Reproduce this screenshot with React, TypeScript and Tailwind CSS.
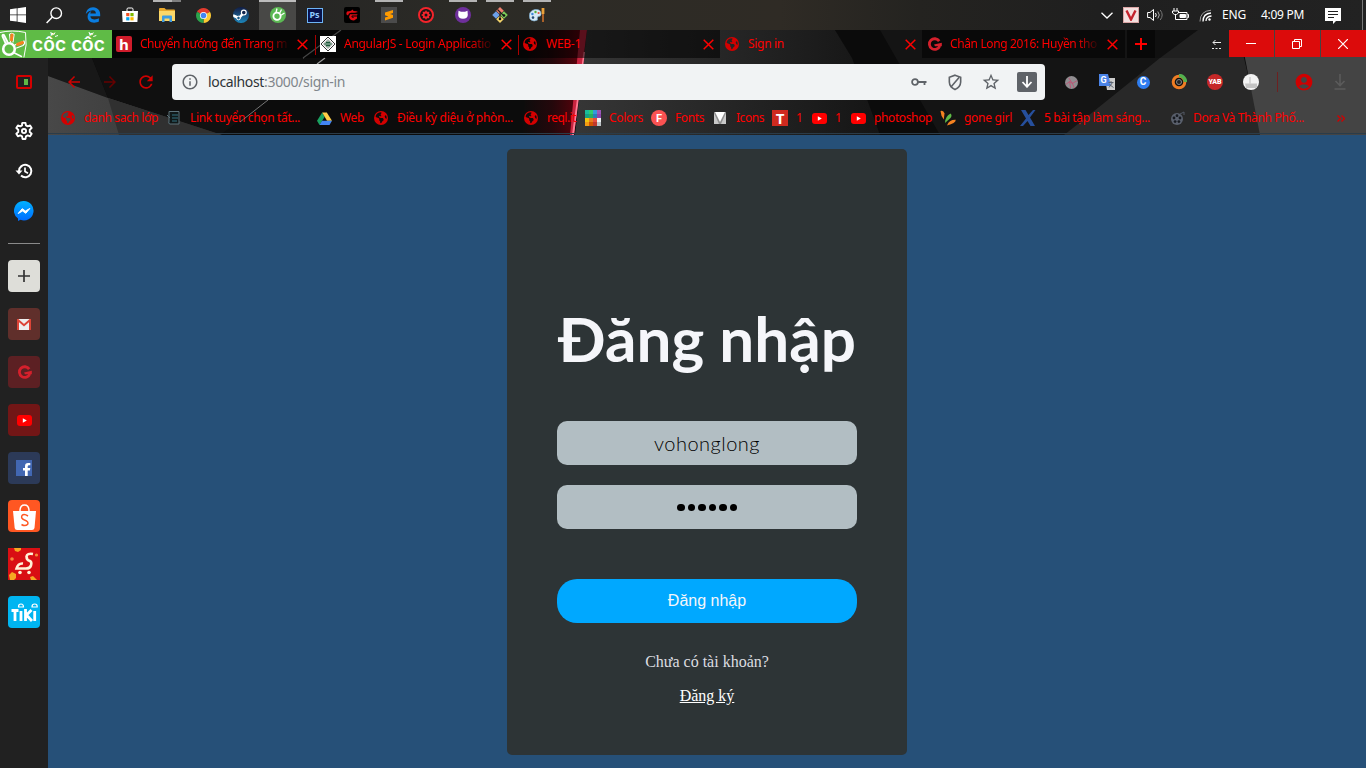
import React, { useLayoutEffect, useRef, useState } from 'react';
import { FaEarthAmericas } from 'react-icons/fa6';
import { MdInfoOutline, MdStarBorder, MdRefresh, MdHistory, MdAccountCircle, MdArrowBack, MdArrowForward } from 'react-icons/md';
import { FaEdgeLegacy } from 'react-icons/fa';

/* Single-line label whose tracking is adjusted so that it fills `w` pixels. */
function Label({ text, w, className = '' }: { text: React.ReactNode; w: number; className?: string }) {
  const ref = useRef<HTMLSpanElement>(null);
  const [spacing, setSpacing] = useState(0);
  useLayoutEffect(() => {
    const el = ref.current;
    if (!el) return;
    const n = (el.textContent || '').length;
    const natural = el.getBoundingClientRect().width - n * spacing;
    if (n > 1) setSpacing((w - natural) / n);
  }, []);
  return (
    <span ref={ref} className={`inline-block shrink-0 whitespace-pre ${className}`} style={{ letterSpacing: spacing }}>
      {text}
    </span>
  );
}

const Globe = () => <FaEarthAmericas className="size-[14px] text-[#d40000]" />;

function YouTube({ className = 'w-[15px] h-[11px]' }: { className?: string }) {
  return (
    <svg viewBox="0 0 15 11" className={className}>
      <rect width="15" height="11" rx="3" fill="#f00" />
      <path d="M5.8 3.2v4.6L9.8 5.5z" fill="#fff" />
    </svg>
  );
}

function Garena({ className = 'size-[15px]', color = '#d5202c' }: { className?: string; color?: string }) {
  return (
    <svg viewBox="0 0 16 16" className={className}>
      <path d="M13 4.400A5.700 5.700 0 1 0 13.600 9.500" fill="none" stroke={color} strokeWidth="3" />
      <path d="M7.500 8 15.800 6.200V9.800H8.500z" fill={color} />
    </svg>
  );
}

function CocCocHand({ className = '' }: { className?: string }) {
  return (
    <svg viewBox="0 0 28 28" className={className} fill="none" strokeLinecap="round">
      <path d="M0 2.500Q12-.5 25.500 2.500 27.500 15 24 27" stroke="#fff" strokeWidth="1" />
      <circle cx="9" cy="19" r="5.800" stroke="#fff" strokeWidth="2.600" />
      <path d="M5.500 13 2.500 6.500Q2 4 4 5l3.500 7" stroke="#fff" strokeWidth="1.800" />
      <path d="M10.500 12 9.500 4.500Q11 2 14 4.500L13 12" stroke="#fff" strokeWidth="1.200" />
      <path d="M11.500 10 12 5" stroke="#f58220" strokeWidth="3" />
      <path d="m15 15 9-4q1.500 2.500-1 4.500L16.500 18" stroke="#fff" strokeWidth="1.200" />
      <path d="m17.500 14.500 5-2" stroke="#f58220" strokeWidth="3" />
      <path d="m14.500 23 7 3.500" stroke="#fff" strokeWidth="1.400" />
    </svg>
  );
}

/* ---------- Windows taskbar ---------- */

const taskIcons: { mark?: string; active?: boolean; icon: React.ReactNode }[] = [
  { icon: <svg viewBox="0 0 16 16" className="mr-px size-4"><path d="M0 2.3 6.7 1.3V7.5H0zM7.5 1.2 16 0V7.5H7.5zM0 8.3H6.7V14.6L0 13.7zM7.5 8.3H16V16L7.5 14.8z" fill="#fff" /></svg> },
  { icon: <svg viewBox="0 0 17 17" className="mr-[2px] size-[17px]"><circle cx="10.2" cy="6.2" r="5.3" fill="none" stroke="#fff" strokeWidth="1.4" /><path d="M6.4 10 .6 16" stroke="#fff" strokeWidth="1.5" /></svg> },
  { icon: <FaEdgeLegacy className="size-4 text-[#0a7de0]" /> },
  { icon: <svg viewBox="0 0 16 16" className="size-4"><path d="M5 4V2.2Q5 1 6.2 1H9.8Q11 1 11 2.2V4" fill="none" stroke="#fff" strokeWidth="1" /><path d="M0 4H16L15.4 15H.6z" fill="#fff" /><path d="M4.2 6h3.2v3.2H4.2z" fill="#f25022" /><path d="M8.4 6h3.2v3.2H8.4z" fill="#7fba00" /><path d="M4.2 10.2h3.2v3.2H4.2z" fill="#00a4ef" /><path d="M8.4 10.2h3.2v3.2H8.4z" fill="#ffb900" /></svg> },
  { mark: 'bg-[linear-gradient(90deg,#b4b4b4_0_19px,#7e7e7e_19px)]', icon: <svg viewBox="0 0 16 14" className="w-4 h-[14px]"><path d="M0 1Q0 0 1 0H5.5L7 1.5H15Q16 1.5 16 2.5V13H0z" fill="#e9a92c" /><path d="M0 3H16V13H0z" fill="#fbd768" /><path d="M3 14V8.5Q3 7.5 4 7.5H12Q13 7.5 13 8.5V14H10.5V10.5H5.5V14z" fill="#3d9be0" /></svg> },
  { icon: <Chrome /> },
  { icon: <span className="flex size-4 items-center justify-center overflow-hidden rounded-full bg-gradient-to-b from-[#101d45] to-[#1b88bd]"><svg viewBox="0 0 16 16" className="size-4"><path d="M0 8.5 6 11 10.5 6" fill="none" stroke="#fff" strokeWidth="2.6" /><circle cx="10.8" cy="5.6" r="2.4" fill="#12254e" stroke="#fff" strokeWidth="1.2" /><circle cx="5.5" cy="11" r="1.8" fill="#155684" stroke="#fff" /></svg></span> },
  { active: true, mark: 'bg-[#bdbdbd]', icon: <svg viewBox="0 0 16 16" className="size-4"><circle cx="8" cy="8" r="8" fill="#5cb954" /><circle cx="7" cy="9.200" r="3.600" fill="none" stroke="#fff" strokeWidth="1.800" /><path d="M6 5.500 7 1.500M9.500 6.500 11.500 2.500M10.500 8.500l4-2.500" stroke="#fff" strokeWidth="1.300" /></svg> },
  { icon: <span className="flex h-[15px] w-4 items-center justify-center border border-[#6db4f5] bg-[#08124a] pb-px font-['Noto_Sans'] text-[9px] leading-none font-bold text-[#90caff]">Ps</span> },
  { icon: <span className="flex size-4 items-center justify-center rounded-[2px] bg-black"><svg viewBox="0 0 14 14" className="size-[14px]"><path d="M2 3.500Q6 3.500 8 1.500L8.300 3Q12 3 13 4L10 4.800H6Q3.500 5 3 7.500L1.500 6.500Q1 5 2 3.500M5 6.200H12.500L12 7.600H7Q5.500 9 7.500 10H9V9.500H7.500V8.400H12V10.500L9 12.500Q5 12.500 4 9z" fill="#e00b12" /></svg></span> },
  { mark: 'bg-[#b4b4b4]', icon: <span className="flex size-4 items-center justify-center bg-[#4b4b4b]"><svg viewBox="0 0 12 12" className="size-3"><path d="M2 3.4 10 1V4L7 5l3 1v2.8L2 11.4V8.5L5.4 7.4 2 6.3z" fill="#ff9b00" /></svg></span> },
  { icon: <svg viewBox="0 0 16 16" className="size-4"><circle cx="8" cy="8" r="7" fill="#151515" stroke="#f3242b" strokeWidth="2" /><path d="m8 3 1 1.7h2.4l-.4 2L13 8l-2 1.3.4 2H9L8 13l-1-1.7H4.6l.4-2L3 8l2-1.3-.4-2H7z" fill="#f3242b" /><circle cx="8" cy="8" r="1.5" fill="#151515" /></svg> },
  { mark: 'bg-[#b4b4b4]', icon: <svg viewBox="0 0 16 16" className="size-4"><circle cx="8" cy="8" r="8" fill="#6e2f9b" /><path d="M3.500 3.700 6 4.800h4l2.500-1.100.3 4.300Q12.700 11.500 8 11.800 3.300 11.500 3.200 8z" fill="#fff" /></svg> },
  { mark: 'bg-[#b4b4b4]', icon: <svg viewBox="0 0 16 16" className="size-4"><path d="m8 0 3.8 3.8L8 7.6 4.2 3.8z" fill="#f08070" /><path d="m4 4.2 3.8 3.8L4 11.8.2 8z" fill="#6d9fe8" /><path d="m12 4.2 3.8 3.8-3.8 3.8L8.2 8z" fill="#7ccc5a" /><path d="m8 8.4 3.8 3.8L8 16l-3.8-3.8z" fill="#f5d56c" /><path d="M5.5 2.5 8 5v8M8 5l4 4" stroke="#1d1d1d" strokeWidth="1.1" fill="none" /><circle cx="8" cy="12" r="1.3" fill="#111" /><circle cx="12" cy="8.500" r="1.3" fill="#111" /></svg> },
  { mark: 'bg-[#b4b4b4]', icon: <svg viewBox="0 0 16 16" className="size-4"><path d="M.5 10Q-.5 4 6 2.500 12.500 2 12 7.500 12 9.500 9 9.500 8 11 8.500 13 5 15 2 13 .5 12 .5 10" fill="#d8e9f5" stroke="#79a9cb" strokeWidth=".7" /><circle cx="3.400" cy="7" r="1.200" fill="#3a86d9" /><circle cx="6.500" cy="5" r="1.200" fill="#56ad3f" /><circle cx="9.600" cy="6" r="1.100" fill="#e5533b" /><circle cx="4" cy="10.600" r="1.300" fill="#264c74" /><path d="M14 1v6" stroke="#e9a13a" strokeWidth="2.800" /><path d="M14 7v8" stroke="#b9672a" strokeWidth="1.800" /></svg> },
];

function Chrome() {
  return (
    <svg viewBox="0 0 16 16" className="size-[15px]">
      <path d="M8 8 1.1 4A8 8 0 0 1 14.9 4z" fill="#e33b2e" />
      <path d="M8 8 14.9 4A8 8 0 0 1 8 16z" fill="#fcc934" />
      <path d="M8 8 8 16A8 8 0 0 1 1.1 4z" fill="#2ba24c" />
      <circle cx="8" cy="8" r="3.8" fill="#fff" />
      <circle cx="8" cy="8" r="3" fill="#4285f4" />
    </svg>
  );
}

function Taskbar() {
  return (
    <div className="flex h-[30px] shrink-0 bg-[linear-gradient(90deg,#242424_0,#242424_240px,#2c2b26_480px,#2f2b25_780px,#242320_920px,#1f1f1f_1100px,#222_1366px)]">
      {taskIcons.map((t, i) => (
        <div key={i} className={`relative flex w-[37px] shrink-0 items-center justify-center ${t.active ? 'bg-[#484846]' : ''}`}>
          {t.icon}
          {t.mark && <span className={`absolute top-0 h-[2px] ${t.active ? 'inset-x-0' : 'right-[4px] left-[5px]'} ${t.mark}`} />}
        </div>
      ))}
      <div className="ml-auto flex items-center font-['Noto_Sans'] text-[12px] text-white">
        <svg viewBox="0 0 12 7" className="mr-[10px] h-[7px] w-3"><path d="m.5.7 5.500 5.300L11.500.7" fill="none" stroke="#fff" strokeWidth="1.300" /></svg>
        <span className="mr-2 flex size-4 items-center justify-center border border-[#dba5a5] bg-[#f4e0df]"><svg viewBox="0 0 12 12" className="size-3"><path d="m1.500 1.500 4.500 9 4.500-9" fill="none" stroke="#c3212b" strokeWidth="2.400" /></svg></span>
        <svg viewBox="0 0 17 14" className="mr-2 h-[14px] w-[17px]" fill="none" stroke="#fff"><path d="M.6 4.500H3L6.500 1.500v11L3 9.500H.6z" /><path d="M8.500 5q1.500 2 0 4" /><path d="M10.800 3.500q3 3.500 0 7" stroke="#aaa" /><path d="M13.200 2q4 5 0 10" stroke="#777" /></svg>
        <svg viewBox="0 0 17 14" className="mr-[10px] h-[14px] w-[17px]" fill="none" stroke="#fff"><path d="M7 4.500h8v7H6" /><path d="M15.500 6.500h1v3h-1" /><path d="M8 6.500h5.500v3H8z" fill="#fff" /><path d="M2 0v3M5 0v3M.5 3h6v2L4.500 6.500h-2L.5 5zM3.500 6.500v5H7" /></svg>
        <svg viewBox="0 0 14 14" className="mr-[9px] size-[14px]" fill="none" stroke="#fff"><circle cx="10.500" cy="11.500" r="1.200" fill="#fff" stroke="none" /><path d="M7 13q0-4.500 5.500-5M4 13.500q0-8 8-8.500" strokeWidth="1.300" /><path d="M1 13.500Q1 3 12 2.200" stroke="#999" /></svg>
        <Label text="ENG" w={24} className="mr-[15px]" />
        <Label text="4:09 PM" w={43} className="mr-[21px]" />
        <svg viewBox="0 0 16 16" className="mr-[21px] size-4 translate-y-px"><path d="M0 0H16V13H11L8 16V13H0z" fill="#fff" /><path d="M3 3.500h10M3 6.500h10M3 9.500h6" stroke="#202020" /></svg>
        <span className="mr-[3px] h-[30px] w-px bg-[#777]" />
      </div>
    </div>
  );
}

/* ---------- Browser chrome ---------- */

function ThemeArt() {
  return (
    <svg viewBox="0 0 1366 105" className="absolute inset-x-0 top-0 h-[105px] w-[1366px]" preserveAspectRatio="none">
      <defs>
        <linearGradient id="glow" x1="0" x2="1"><stop offset="0" stopColor="#50000a" stopOpacity="0" /><stop offset=".5" stopColor="#50000a" stopOpacity=".35" /><stop offset="1" stopColor="#70000c" stopOpacity=".9" /></linearGradient>
        <linearGradient id="mid" x1="0" x2="1"><stop offset="0" stopColor="#363636" /><stop offset=".35" stopColor="#292929" /><stop offset="1" stopColor="#101010" /></linearGradient>
        <linearGradient id="shard" x1="0" x2="1"><stop offset="0" stopColor="#484848" /><stop offset=".4" stopColor="#404040" /><stop offset="1" stopColor="#2c2c2c" /></linearGradient>
      </defs>
      <rect width="1366" height="105" fill="#0c0c0c" />
      <path d="M48 28H92L108 68 48 46z" fill="#181818" />
      <path d="M92 28H200L268 70 220 105 108 68z" fill="#101010" />
      <path d="M48 46 108 68 222 105H48z" fill="url(#shard)" />
      <path d="M108 68 222 105H119z" fill="#303030" />
      <path d="M341 0 303 28M325 28 317 34" stroke="#999" strokeWidth="1.200" />
      <path d="M268 70 240 92" stroke="#777" strokeWidth="1" />
      <path d="M530 0H582L571 105H522z" fill="url(#glow)" />
      <path d="M587 0H840L925 105H575z" fill="url(#mid)" />
      <path d="M580 0h7L574 105h-4z" fill="#c8243f" />
      <path d="M583.500 22h1.500L574 105h-2z" fill="#ff7b92" />
      <path d="M835 0 925 105H1090L1200 0z" fill="#141414" />
      <path d="M835 0H880L940 105H880L852 28z" fill="#0b0b0b" />
      <path d="M1198 0 1160 28 1078 94 1064 105H1262L1244 28 1240 0z" fill="#282828" />
      <path d="M1240 0H1366V105H1260L1245 28z" fill="#444" />
    </svg>
  );
}

const Cross = () => (
  <svg viewBox="0 0 11 11" className="size-[11px] shrink-0"><path d="M.7.7l9.600 9.600M10.300.7.7 10.300" stroke="#f00" strokeWidth="1.500" /></svg>
);

function Tab({ icon, text, w, active, fade, width }: { icon: React.ReactNode; text: string; w: number; active?: boolean; fade?: boolean; width: string }) {
  return (
    <div className={`flex h-7 shrink-0 items-center pl-1 ${width} ${active ? '' : 'bg-black/55'}`}>
      <span className="mr-2 flex size-4 shrink-0 items-center justify-center">{icon}</span>
      <div className={`flex w-[148px] shrink-0 ${fade ? '[mask-image:linear-gradient(90deg,#000_126px,rgba(0,0,0,.1)_148px)]' : ''}`}>
        <Label text={text} w={w} />
      </div>
      <span className="ml-[9px]"><Cross /></span>
    </div>
  );
}

function TabStrip() {
  return (
    <div className="relative flex h-7 shrink-0">
      <div className="flex w-28 shrink-0 items-center bg-[#5fbb46]">
        <CocCocHand className="size-7" />
        <svg viewBox="0 0 76 28" className="ml-[4px] h-7 w-[76px]">
          <text x="0" y="20.500" fill="#fff" fontFamily="Inter" fontWeight="600" fontSize="18.500" textLength="73" lengthAdjust="spacingAndGlyphs">cốc cốc</text>
          <path d="M19.500 4.500 18.800 2M21.500 5 23 2.500M23 6.500l3-1M57.800 4.500 57 2M59.800 5l1.500-2.500M61.300 6.500l3-1" stroke="#fff" strokeWidth="1" />
        </svg>
      </div>
      <Tab width="w-[204px]" fade w={147} text="Chuyển hướng đến Trang m" icon={<span className="flex size-4 items-center justify-center rounded-[2px] bg-[#cf1c2b] font-['Open_Sans'] text-[15px] leading-none font-bold text-white">h</span>} />
      <Tab width="w-[202px]" fade w={147} text="AngularJS - Login Applicatio" icon={<span className="flex size-4 items-center justify-center bg-white"><svg viewBox="0 0 16 16" className="size-4"><path d="m8 1 7 7-7 7-7-7z" fill="none" stroke="#333" /><path d="m8 3.500 4.500 4.500L8 12.500 3.500 8z" fill="#b8cabe" stroke="#777" strokeWidth=".6" /><path d="M4.500 8h7M6 6.300h4M6 9.700h4" stroke="#1d5a3c" strokeWidth="1.200" /></svg></span>} />
      <Tab width="w-[202px]" w={35} text="WEB-1" icon={<Globe />} />
      <Tab width="w-[202px]" active w={36} text="Sign in" icon={<Globe />} />
      <Tab width="w-[203px]" fade w={147} text="Chân Long 2016: Huyền tho" icon={<Garena />} />
      <div className="ml-[2px] flex w-7 items-center justify-center bg-black/60">
        <svg viewBox="0 0 12 12" className="size-3"><path d="M6 0v12M0 6h12" stroke="#f00" strokeWidth="2" /></svg>
      </div>
      <div className="flex flex-1 items-center justify-end bg-black/20">
        <svg viewBox="0 0 11 9" className="mr-[7px] h-[9px] w-[11px]" fill="none" stroke="#eee"><path d="M10 2.500H2M4.500 0 2 2.500 4.500 5" /><path d="M1 8.500h10" strokeDasharray="2 1.500" /></svg>
      </div>
      <div className="flex h-[27px] shrink-0 gap-px">
        <div className="flex w-[45px] items-center justify-center bg-[#dc0b0b]"><span className="mr-px h-px w-[10px] bg-white" /></div>
        <div className="flex w-[45px] items-center justify-center bg-[#dc0b0b]"><svg viewBox="0 0 10 10" className="mr-px size-[10px]" fill="none" stroke="#fff"><path d="M.5 2.500h7v7h-7zM2.500 2.500v-2h7v7h-2" /></svg></div>
        <div className="flex w-[45px] items-center justify-center bg-[#dc0b0b]"><svg viewBox="0 0 10 10" className="mr-px size-[10px]"><path d="m0 0 10 10M10 0 0 10" stroke="#fff" strokeWidth="1.200" /></svg></div>
      </div>
      <span className="absolute top-[5px] left-[315px] h-5 w-px bg-[#a00]" />
      <span className="absolute top-[5px] left-[518px] h-5 w-px bg-[#a00]" />
    </div>
  );
}

const extensions: React.ReactNode[] = [
  <svg viewBox="0 0 14 14" className="size-[13px]"><circle cx="7" cy="7" r="7" fill="#918e91" /><path d="M1 9 5 6l3 2 5-3M5 6l1 7M8 8l2 5M4 2l4 6" stroke="#c9456d" strokeWidth=".8" fill="none" /></svg>,
  <svg viewBox="0 0 16 16" className="size-4"><path d="M6 4h10v12H8z" fill="#ccc" /><path d="M0 0h9l3 12H0z" fill="#4b84e8" /><text x="1.500" y="9" fill="#fff" fontSize="9" fontWeight="700" fontFamily="Roboto">G</text><path d="M9.500 8.500h5M12 7v1.500m-2 5 3.500-5m-3 2 4 3" stroke="#5c6470" fill="none" /></svg>,
  <span className="flex size-[13px] items-center justify-center rounded-full bg-[#2f7df0] font-['Roboto'] text-[10px] leading-none font-bold text-white">C</span>,
  <svg viewBox="0 0 16 16" className="size-4"><circle cx="8" cy="8" r="5.800" fill="#111" stroke="#ef7d24" strokeWidth="3" /><path d="M8 1.500A6.500 6.500 0 0 1 14.500 8" fill="none" stroke="#53b04e" strokeWidth="3.500" /><circle cx="8" cy="8" r="2.500" fill="#222" stroke="#888" /></svg>,
  <span className="flex size-4 items-center justify-center rounded-full bg-[#c62828] font-['Roboto'] text-[7px] leading-none font-black text-white">YAB</span>,
  <svg viewBox="0 0 16 16" className="size-4"><circle cx="8" cy="8" r="8" fill="#f4f4f4" /><path d="M2 9.500H14V14H3z" fill="#c4c4c4" /><path d="M7 3v6.500" stroke="#bbb" /></svg>,
];

function Toolbar() {
  return (
    <div className="relative flex h-12 items-center">
      <div className="flex w-[124px] shrink-0 items-center pl-2 text-[#d00000]">
        <span className="flex w-9 justify-center"><MdArrowBack className="size-[18px]" /></span>
        <span className="flex w-9 justify-center text-[#650000]"><MdArrowForward className="size-[18px]" /></span>
        <span className="flex w-9 justify-center"><MdRefresh className="size-5" /></span>
      </div>
      <div className="flex h-9 w-[873px] shrink-0 items-center rounded-[4px] bg-[#f1f3f4] text-[#5f6368]">
        <MdInfoOutline className="mx-[9px] size-[18px]" />
        <Label w={137} className="pb-px text-[14px]" text={<><span className="text-[#2f3337]">localhost</span><span className="text-[#80868b]">:3000/sign-in</span></>} />
        <div className="ml-auto flex pr-0">
          <span className="flex w-9 items-center justify-center"><svg viewBox="0 0 16 8" className="h-2 w-4" fill="none" stroke="#5f6368"><circle cx="4" cy="4" r="2.900" strokeWidth="1.800" /><path d="M7 4h8.500M13.500 4v3" strokeWidth="1.800" /></svg></span>
          <span className="flex w-9 items-center justify-center"><svg viewBox="0 0 16 18" className="h-[17px] w-4" fill="none" stroke="#5f6368" strokeWidth="1.700"><path d="M8 1.200 14 3.500V8.500Q13.800 14 8 16.500 2.200 14 2 8.500V3.500z" /><path d="m3.500 14 9-10.500" /></svg></span>
          <span className="flex w-9 items-center justify-center"><MdStarBorder className="size-5" /></span>
          <span className="flex w-9 items-center justify-center"><span className="flex size-5 items-center justify-center rounded-[2px] bg-[#5f6368]"><svg viewBox="0 0 12 12" className="size-3"><path d="M6 0v10.500M1.500 6 6 10.800 10.500 6" fill="none" stroke="#fff" strokeWidth="1.800" /></svg></span></span>
        </div>
      </div>
      <div className="ml-2 flex">
        {extensions.map((e, i) => <span key={i} className="flex w-9 items-center justify-center">{e}</span>)}
      </div>
      <span className="ml-2 h-5 w-px bg-[#6d2020]" />
      <span className="ml-2 flex w-9 justify-center"><MdAccountCircle className="size-5 text-[#d00000]" /></span>
      <span className="flex w-9 justify-center"><svg viewBox="0 0 12 16" className="h-4 w-3" fill="none" stroke="#5b5b5b" strokeWidth="1.600"><path d="M6 0v11M1.500 7 6 11.500 10.500 7M.5 15h11" /></svg></span>
    </div>
  );
}

const bookmarks: { text: string; w: number; slot: string; icon: React.ReactNode }[] = [
  { text: 'danh sach lớp', w: 74, slot: 'w-[106px]', icon: <Globe /> },
  { text: 'Link tuyển chọn tất...', w: 110, slot: 'w-[150px]', icon: <svg viewBox="0 0 16 16" className="size-4"><path d="M3 1.500h10V14H4Q2 14 3 11z" fill="#101818" stroke="#5c727b" /><path d="M6 5h6M6 8h6M6 11h5" stroke="#327080" /><path d="m1 5 3 3" stroke="#5c727b" /></svg> },
  { text: 'Web', w: 24, slot: 'w-[57px]', icon: <svg viewBox="0 0 16 16" className="size-[15px]"><path d="M5.500 1.500 0 10.500 2.700 15 8.200 6z" fill="#1aa260" /><path d="M5.500 1.500h5L16 10.500h-5.300z" fill="#ffcf48" /><path d="M5.400 10.500H16L13.300 15H2.700z" fill="#4285f4" /></svg> },
  { text: 'Điều kỳ diệu ở phòn...', w: 116, slot: 'w-[150px]', icon: <Globe /> },
  { text: 'reql.it', w: 29, slot: 'w-[62px]', icon: <Globe /> },
  { text: 'Colors', w: 34, slot: 'w-[66px]', icon: <span className="grid size-4 grid-cols-4 grid-rows-4"><i className="bg-[#1abc9c]" /><i className="bg-[#2ecc71]" /><i className="bg-[#3498db]" /><i className="bg-[#9b59b6]" /><i className="bg-[#16a085]" /><i className="bg-[#27ae60]" /><i className="bg-[#2980b9]" /><i className="bg-[#8e44ad]" /><i className="bg-[#f1c40f]" /><i className="bg-[#e67e22]" /><i className="bg-[#e74c3c]" /><i className="bg-[#ecf0f1]" /><i className="bg-[#f39c12]" /><i className="bg-[#d35400]" /><i className="bg-[#c0392b]" /><i className="bg-[#bdc3c7]" /></span> },
  { text: 'Fonts', w: 29, slot: 'w-[61px]', icon: <span className="flex size-4 items-center justify-center rounded-full bg-[#fa5252] font-['Roboto'] text-[11px] leading-none font-bold text-white">F</span> },
  { text: 'Icons', w: 28, slot: 'w-[60px]', icon: <svg viewBox="0 0 12 12" className="mr-px size-3"><path d="M0 0h12v12H0z" fill="#8f8f8f" /><path d="M1 0h10L6 10z" fill="#fff" /><path d="M0 1v11h5zM12 1v11H7z" fill="#c8c8c8" /></svg> },
  { text: '1', w: 6, slot: 'w-[39px]', icon: <span className="flex size-4 items-center justify-center bg-[#cf2a1f] font-['Open_Sans'] text-[15px] leading-none font-bold text-white">T</span> },
  { text: '1', w: 6, slot: 'w-[39px]', icon: <YouTube /> },
  { text: 'photoshop', w: 58, slot: 'w-[90px]', icon: <YouTube /> },
  { text: 'gone girl', w: 48, slot: 'w-[80px]', icon: <svg viewBox="0 0 16 16" className="size-4"><path d="M.5 1Q3.500 0 4.500 3.500L3.800 9.500Q1 6.500 .5 1" fill="#f58220" /><path d="M10.500 3.500q2 2 0 4.500l-5.500 5Q5 6.500 10.500 3.500" fill="#5fbb46" /><path d="M15.800 9.800q0 3.500-8.800 5.700 2-6 8.800-5.700" fill="#f58220" /></svg> },
  { text: '5 bài tập làm sáng...', w: 106, slot: 'w-[149px]', icon: <svg viewBox="0 0 16 16" className="size-4"><path d="M1 0h4.500l3 5L13 0h2.500L10 7.500 15 16h-4.500L7.500 11 3 16H0L6 8.500z" fill="#264f9c" /></svg> },
  { text: 'Dora Và Thành Phố...', w: 111, slot: 'w-[140px]', icon: <svg viewBox="0 0 16 16" className="size-4"><circle cx="8" cy="9" r="6" fill="#5a606d" /><g fill="#171a20"><circle cx="8" cy="5.700" r="1.400" /><circle cx="11" cy="8" r="1.400" /><circle cx="9.900" cy="11.600" r="1.400" /><circle cx="6.100" cy="11.600" r="1.400" /><circle cx="5" cy="8" r="1.400" /></g><path d="m11 4 4-2v3" stroke="#525865" fill="none" /></svg> },
];

function Bookmarks() {
  return (
    <div className="relative flex h-7 items-center border-b border-[#2b3c49] pb-[3px] pl-3 text-[#f00]">
      {bookmarks.map((b, i) => (
        <div key={i} className={`flex shrink-0 items-center gap-2 ${b.slot}`}>
          <span className="flex size-4 shrink-0 items-center justify-center">{b.icon}</span>
          <Label text={b.text} w={b.w} />
        </div>
      ))}
      <svg viewBox="0 0 8 7" className="mt-px ml-7 h-[7px] w-2" fill="none" stroke="#d00000" strokeWidth="1.400"><path d="m.5.5 3 3-3 3M4.500.5l3 3-3 3" /></svg>
    </div>
  );
}

/* ---------- Left sidebar ---------- */

const tile = 'mb-4 flex size-8 shrink-0 items-center justify-center overflow-hidden rounded-[4px]';

function Sidebar() {
  return (
    <aside className="relative flex w-12 shrink-0 flex-col items-center bg-[#212121]">
      <span className="mt-[17px] flex h-[14px] w-4 items-center justify-end rounded-[2px] border-2 border-[#d50000] pr-[2px]"><span className="h-[6px] w-1 bg-[#5fb946]" /></span>
      <svg viewBox="0 0 24 24" className="mt-[32px] size-5" fill="none" stroke="#fff" strokeWidth="2.300" strokeLinejoin="round"><path d="m9.700 3 .5-.8h3.600l.5 3 2.200 1.200 2.800-1.100 1.900 3.200-2.300 1.900v2.900l2.300 1.900-1.900 3.200-2.800-1.100-2.200 1.200-.5 3h-3.600l-.5-3-2.200-1.200-2.800 1.100-1.900-3.200 2.300-1.900v-2.900L2.800 8.500l1.900-3.200 2.800 1.100 2.200-1.200z" /><circle cx="12" cy="12" r="2.500" /></svg>
      <svg viewBox="0 0 20 20" className="mt-5 size-5" fill="none" stroke="#fff" strokeWidth="2"><path d="M5 10a6.200 6.200 0 1 1 2 4.600" /><path d="M1.500 9.500h7L5 13.500z" fill="#fff" stroke="none" /><path d="M11 6.500v4l3 1.800" strokeWidth="1.700" /></svg>
      <svg viewBox="0 0 20 20" className="mt-5 size-5"><defs><linearGradient id="msg" x2="0" y2="1"><stop stopColor="#00b2ff" /><stop offset="1" stopColor="#006aff" /></linearGradient></defs><path d="M10 0a9.700 9.700 0 1 1-3.500 18.800L4 20V17.500A9.700 9.700 0 0 1 10 0" fill="url(#msg)" /><path d="m4.200 12.500 4-4.800 3.200 2.300 4.400-2.500-4 4.800-3.200-2.300z" fill="#fff" stroke="#fff" /></svg>
      <span className="mt-[22px] mb-4 h-px w-8 shrink-0 bg-[#8a8a8a]" />
      <span className={`${tile} bg-[#deded9]`}><svg viewBox="0 0 12 12" className="size-3"><path d="M6 0v12M0 6h12" stroke="#333" strokeWidth="1.700" /></svg></span>
      <span className={`${tile} bg-[#602f2b]`}><svg viewBox="0 0 14 11" className="h-[11px] w-[14px]"><path d="M0 0h14v11H0z" fill="#eee" /><path d="M1 11V1l6 5.200L13 1v10" fill="none" stroke="#dc4437" strokeWidth="2" /></svg></span>
      <span className={`${tile} bg-[#5c2023]`}><Garena /></span>
      <span className={`${tile} bg-[#721616]`}><YouTube /></span>
      <span className={`${tile} bg-[#2c3a58]`}><span className="flex size-4 items-end justify-end bg-[#4267b2] pr-px"><svg viewBox="0 0 9 14" className="h-[14px] w-[9px]"><path d="M3 14V8.500H1V6H3V4.200Q3 1 6 1H8.300V3.300H7Q5.700 3.300 5.700 4.500V6H8.300L7.900 8.500H5.700V14z" fill="#fff" /></svg></span></span>
      <span className={`${tile} bg-[#ff5722]`}><svg viewBox="0 0 32 32" className="size-8"><path d="M5 11H28L26.500 28Q26 30 24 30H9Q7 30 6.700 28z" fill="#fff" /><path d="M12 11Q12 5 16.500 5T21 11" fill="none" stroke="#fff" strokeWidth="1.500" /><path d="M20 16q-4-2.500-6-.5-1.500 3 2.500 4.500 4.500 1.500 3.200 4.300-2.500 2.500-6.200.2" fill="none" stroke="#ff5722" strokeWidth="1.500" /></svg></span>
      <span className="mb-4 size-8 shrink-0"><svg viewBox="0 0 32 32" className="size-8"><path d="M0 0h32v32H0z" fill="#d90f13" /><path d="m6 0 1 3 3 1 3-2V0zM1 27l3-3 4 2v4l-2 2H2zM23 32l-1-3 3-1 4 4" fill="#f6a723" /><circle cx="4" cy="11" r="1.800" fill="#f58a3c" /><circle cx="28.500" cy="7" r="1.600" fill="#f58a3c" /><path d="M25 6q-6-1-6.500 2.500Q18.500 12 22 13q2 1 1 4.500-1 3-5 3H8.500Q10 15 15 15.500" fill="none" stroke="#fff1d7" strokeWidth="2.600" /><circle cx="12" cy="24.500" r="1.800" fill="#fff1d7" /><circle cx="21" cy="24.500" r="1.800" fill="#fff1d7" /></svg></span>
      <span className={`${tile} bg-[#00b5f1]`}><svg viewBox="0 0 32 32" className="size-8" fill="none" stroke="#fff" strokeWidth="2.800"><path d="M3.500 14.500h7M7 14.500V25M13 15v10M17.500 13v12M23.500 14l-5 5 5.500 6M26.700 15v10" /><path d="M10.500 11q0-3 2.500-3t2.500 3zM24 11q0-3 2.700-3t2.500 3z" strokeWidth="1.200" /></svg></span>
    </aside>
  );
}

/* ---------- Page ---------- */

function SignIn() {
  return (
    <main className="flex flex-1 justify-center bg-[#265078] pt-[15px]">
      <section className="flex h-[606px] w-[400px] flex-col items-center rounded-[5px] bg-[#2d3436] pt-[147px]">
        <h1 className="flex h-[84px] items-center justify-center font-['Lato'] text-[62px] leading-none font-bold text-[#f5f6fa]">
          <Label text="Đăng nhập" w={298} />
        </h1>
        <div className="mt-[41px] flex h-11 w-[300px] items-center justify-center rounded-[10px] bg-[#b2bec3] font-['Lato'] text-[20px] font-light text-black">
          <Label text="vohonglong" w={106} />
        </div>
        <div className="mt-5 flex h-11 w-[300px] items-center justify-center gap-[3px] rounded-[10px] bg-[#b2bec3] pt-px">
          {[0, 1, 2, 3, 4, 5].map((i) => <span key={i} className="size-[7.5px] rounded-full bg-black" />)}
        </div>
        <button className="mt-[50px] h-11 w-[300px] rounded-[20px] bg-[#00a8ff] font-['Liberation_Sans'] text-[16px] text-[#f5f6fa]">Đăng nhập</button>
        <p className="mt-[30px] font-['Liberation_Serif'] text-[16px] leading-[18px] text-[#dcdde1]">Chưa có tài khoản?</p>
        <a className="mt-4 font-['Liberation_Serif'] text-[16px] leading-[18px] text-white underline">Đăng ký</a>
      </section>
    </main>
  );
}

export default function App() {
  return (
    <div className="flex h-[768px] w-[1366px] flex-col overflow-hidden font-['Noto_Sans',sans-serif] text-[12px] text-[#f00]">
      <Taskbar />
      <div className="relative flex min-h-0 flex-1 flex-col">
        <ThemeArt />
        <TabStrip />
        <div className="flex min-h-0 flex-1">
          <Sidebar />
          <div className="flex min-w-0 flex-1 flex-col">
            <Toolbar />
            <Bookmarks />
            <SignIn />
          </div>
        </div>
      </div>
    </div>
  );
}
